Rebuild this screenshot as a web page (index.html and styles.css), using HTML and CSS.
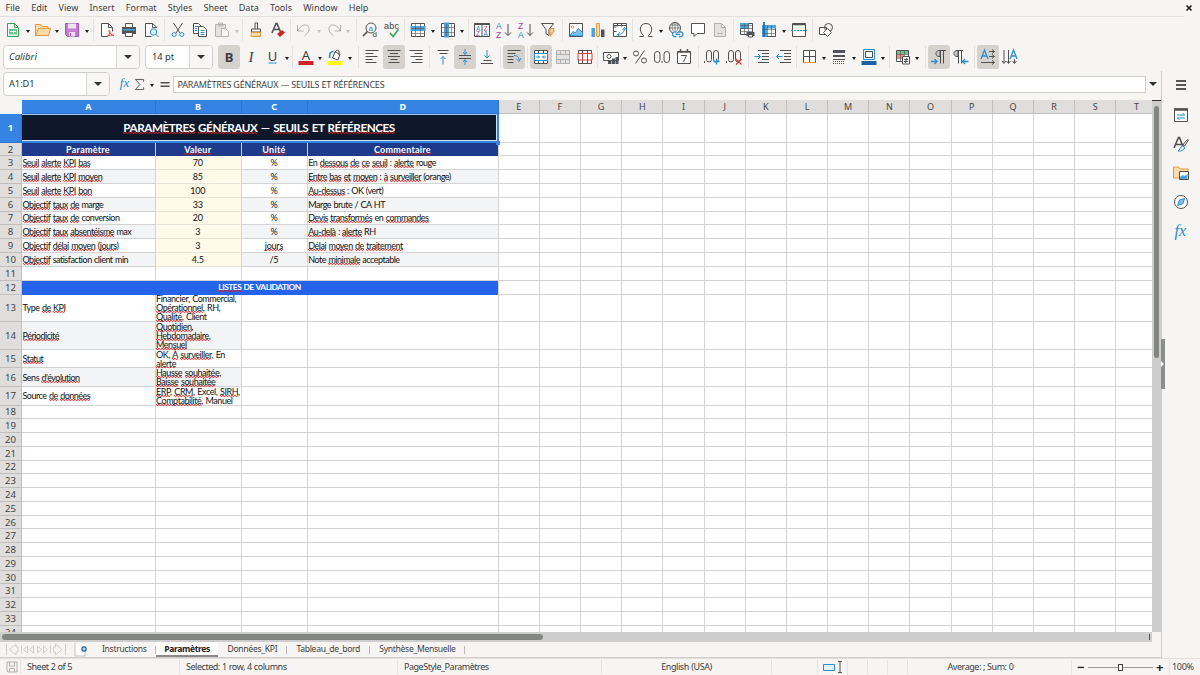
FILE: index.html
```html
<!DOCTYPE html>
<html lang="en">
<head>
  <meta charset="UTF-8">
  <meta name="viewport" content="width=device-width, initial-scale=1.0">
  <title>Spreadsheet</title>
  <link rel="stylesheet" href="styles.css">
</head>
<body>
  <div class="window">
    <div class="menubar">
      <span>File</span><span>Edit</span><span>View</span><span>Insert</span><span>Format</span><span>Styles</span><span>Sheet</span><span>Data</span><span>Tools</span><span>Window</span><span>Help</span>
      <svg class="close" viewBox="0 0 8 8"><path d="M1.5 1.5l5 5M6.5 1.5l-5 5"/></svg>
    </div>

    <!-- standard toolbar -->
    <div class="toolbar standard">
      <div class="group">
        <button><svg viewBox="0 0 16 16"><path class="green paper" d="M2.5 1.5h7l4 4v9h-11z"/><path class="green" d="M9.5 1.5v4h4"/><path class="fgreen" d="M4 7h8v5.500h-8z"/><path class="white" d="M5 9.500h6M8.500 8v3.500"/></svg></button><i class="arrow"></i>
        <button><svg viewBox="0 0 16 16"><path class="orange forange" d="M.5 13.500v-11h5l1.500 2h6v2"/><path class="orange forange" d="M.5 13.500l3-7h12l-2 7z"/></svg></button><i class="arrow"></i>
        <button><svg viewBox="0 0 16 16"><path class="purple fpurple" d="M1.500 1.500h13v13h-11l-2-2z"/><path class="fpaper" d="M4 1.500h8v5h-8zM5 10h6v4.500h-6z"/><path class="purple" d="M6.500 11v3"/></svg></button><i class="arrow"></i>
      </div>
      <div class="group">
        <button><svg viewBox="0 0 16 16"><path class="paper" d="M8 14.500h-5.500v-13h7l4 4v4"/><path d="M9.500 1.500v4h4"/><path class="red" d="M8 14.500c3-2 3.500-5 2.500-6s-1 3 4.500 5c-2-1-5 0-7 1z"/></svg></button>
        <button><svg viewBox="0 0 16 16"><path class="paper" d="M4.500 5v-3.500h7v3.500"/><path class="fdark" d="M1 5h14v7h-14z"/><path class="fblue" d="M2 7h12v1.500h-12z"/><path class="paper" d="M4.500 10.500h7v4h-7z"/></svg></button>
        <button><svg viewBox="0 0 16 16"><path class="paper" d="M13.500 6v-1l-4-3.500h-7v13h6"/><path d="M9.500 1.500v4h4"/><circle class="blue flight" cx="10.500" cy="10" r="3.200"/><path class="blue" d="M13 12.500l2.500 2.500"/></svg></button>
      </div>
      <div class="group">
        <button><svg viewBox="0 0 16 16"><path d="M3.500 1l6.500 10M12.500 1l-6.500 10"/><circle class="blue" cx="4.200" cy="12.500" r="2"/><circle class="blue" cx="11.800" cy="12.500" r="2"/></svg></button>
        <button><svg viewBox="0 0 16 16"><path class="paper" d="M1.500 1.500h5l3 3v7h-8z"/><path class="paper" d="M6.500 4.500h5l3 3v7h-8z"/><path class="blue" d="M3 4.500h3M3 6.500h2M3 8.500h2M8.500 8.500h4M8.500 10.500h4M8.500 12.500h4"/></svg></button>
        <button><svg class="off" viewBox="0 0 16 16"><path class="fgray" d="M1.500 2.500h10v12h-10z"/><path d="M4.500 1h4v3h-4z"/><path class="paper" d="M7.500 6.500h4l3 3v5h-7z"/></svg></button><i class="arrow dim"></i>
      </div>
      <div class="group">
        <button><svg viewBox="0 0 16 16"><path d="M7 7v-6h2.500v6M3.500 7h9v3h-9z"/><path class="orange forange" d="M3.500 10.500h9v4h-9.500z"/></svg></button>
        <button><svg viewBox="0 0 16 16"><path class="thick" d="M2 11l4-9.500h1l3.500 8.500M3.500 7.500h5.500"/><path class="red fred" d="M7 12l5-4 3 2.500-5 4.500z"/></svg></button>
      </div>
      <div class="group">
        <button><svg class="off" viewBox="0 0 16 16"><path d="M1.500 3v6h6M1.500 9c3-6 9-8 11-4s-2 7-4 9"/></svg></button><i class="arrow dim"></i>
        <button><svg class="off" viewBox="0 0 16 16"><path d="M14.500 3v6h-6M14.500 9c-3-6-9-8-11-4s2 7 4 9"/></svg></button><i class="arrow dim"></i>
      </div>
      <div class="group">
        <button><svg viewBox="0 0 16 16"><circle cx="9" cy="6" r="5"/><path class="thick" d="M5.500 9.500l-4.500 4.500"/><text class="tblue" x="6.500" y="8.500" font-size="8">a</text><text x="10.500" y="15" font-size="8">d</text></svg></button>
        <button><svg viewBox="0 0 16 16"><text x="0" y="7" font-size="9" textLength="15">abc</text><path class="green thick" d="M6 11l3 3.500 5.500-7"/></svg></button>
      </div>
      <div class="group">
        <button><svg viewBox="0 0 16 16"><path class="paper" d="M1.500 1.500h13v13h-13z"/><path class="fblue" d="M.5 4h15v5h-15z"/><path class="fine" d="M1.500 11.500h13M1.500 6.500h13M5.500 1.500v13M10.500 1.500v13"/></svg></button><i class="arrow"></i>
        <button><svg viewBox="0 0 16 16"><path class="paper" d="M1.500 1.500h13v13h-13z"/><path class="fblue" d="M4 .5h5v15h-5z"/><path class="fine" d="M1.500 5.500h13M1.500 10.500h13M11.500 1.500v13M6.500 1.500v13"/></svg></button><i class="arrow"></i>
      </div>
      <div class="group">
        <button><svg viewBox="0 0 16 16"><path class="paper" d="M.5 1.500h15v13h-15zM8 3v11.500"/><path class="thick" d="M.5 2.200h15"/><g font-size="6.500"><text class="tblue" x="2" y="8.800">A</text><text class="tpurple" x="2" y="14">Z</text><text class="tpurple" x="9.500" y="8.800">Z</text><text class="tblue" x="9.500" y="14">A</text></g></svg></button>
        <button><svg viewBox="0 0 16 16"><g font-size="8.500"><text class="tblue" x="0" y="7">A</text><text class="tpurple" x="0" y="15.500">Z</text></g><path d="M12 2v11.500M9 10.500l3 3 3-3"/></svg></button>
        <button><svg viewBox="0 0 16 16"><g font-size="8.500"><text class="tpurple" x="0" y="7">Z</text><text class="tblue" x="0" y="15.500">A</text></g><path d="M12 2v11.500M9 10.500l3 3 3-3"/></svg></button>
        <button><svg viewBox="0 0 16 16"><path d="M1.500 1.500h12l-4.500 6v6l-3-2v-4z"/><path class="orange forange" d="M11 6.500h3l-1 2.500h1.500l-4.500 5.500 1-4h-1.500z"/></svg></button>
      </div>
      <div class="group">
        <button><svg viewBox="0 0 16 16"><path class="paper" d="M1.500 1.500h13v13h-13z"/><circle class="orange" cx="4.500" cy="5" r="1.200"/><path class="blue fsky" d="M2 13.500l3-4 2 1.500 3.500-4.500 4 4v3.500z"/></svg></button>
        <button><svg viewBox="0 0 16 16"><path class="fblue" d="M1.500 6h3.500v9h-3.500z"/><path class="orange forange" d="M6.500 1.500h3v13h-3z"/><path class="fdark" d="M11 7.500h3.500v7.500h-3.500z"/></svg></button>
        <button><svg viewBox="0 0 16 16"><path class="paper" d="M1.500 1.500h13v13h-13zM5.500 1.500v3M1.500 5h3M9.500 1.500v3M1.500 9.500h3M1.500 3.500h13"/><path class="blue" d="M6 12.500c4 0 6-2 6.500-6M10.500 8l2-2.500 2 2.500M8 10.500l-2.500 2 2.500 2"/></svg></button>
      </div>
      <div class="group">
        <button><svg viewBox="0 0 16 16"><path d="M1.500 14.500h4v-1c-5-4-4-12 2.500-12s7.500 8 2.500 12v1h4"/></svg></button><i class="arrow"></i>
        <button><svg viewBox="0 0 16 16"><circle cx="7" cy="6" r="5.500"/><path class="fine" d="M1.500 6h11M7 .5v9M2.500 3h9M5 1q-2 5 0 8M9 1q2 5 0 8"/><path class="paper blue wide" d="M8.500 10h-2.500q-3 2 0 4.500h2.500M11 10h2.500q3 2 0 4.500h-2.500M7.500 12.300h4.500"/></svg></button>
        <button><svg viewBox="0 0 16 16"><path class="paper" d="M1.500 1.500h13v10h-7.500l-3 3v-3h-2.500z"/></svg></button>
        <button><svg class="off" viewBox="0 0 16 16"><path class="fgray" d="M2.500 1.500h7l4 4v9h-11zM9.500 1.500v4h4M5 11.500h6"/></svg></button>
      </div>
      <div class="group">
        <button><svg viewBox="0 0 16 16"><path class="paper" d="M1.500 1.500h12v11h-12z"/><path class="fblue" d="M1 1h9v6h-9z"/><path class="fine" d="M1.500 3.500h12M1.500 6.500h12M1.500 9.500h12M5.500 1.500v11M9.500 1.500v11"/><path class="fdark" d="M7.500 10h8v4h-8z"/><path class="paper" d="M9.500 12.500h4v2.500h-4z"/></svg></button>
        <button><svg viewBox="0 0 16 16"><path class="paper" d="M1.500 3.500h13v11h-13z"/><path class="fblue" d="M1 3h14v3.500h-9v8.500h-5z"/><path class="fine" d="M1.500 7.500h13M1.500 11.500h13M6.500 3.500v11M10.500 3.500v11"/><path class="navy thick" d="M3 0v15"/></svg></button><i class="arrow"></i>
        <button><svg viewBox="0 0 16 16"><path class="paper" d="M1.500 1.500h13v13h-13z"/><path class="thick" d="M1.500 2.500h13"/><path class="blue" stroke-dasharray="2 1" d="M0 8.500h16"/></svg></button>
      </div>
      <div class="group">
        <button><svg viewBox="0 0 16 16"><path class="paper" d="M1.500 5.500h7v7h-7z"/><circle cx="10.500" cy="5.500" r="4"/><path class="paper" d="M9.500 6.500l4 4-4 4-4-4z"/></svg></button>
      </div>
    </div>

    <!-- formatting toolbar -->
    <div class="toolbar formatting">
      <div class="combo font-name"><span>Calibri</span><b></b></div>
      <div class="combo font-size"><span>14 pt</span><b></b></div>
      <div class="group">
        <button class="on"><svg viewBox="0 0 16 16"><text class="glyph bold" x="8" y="13">B</text></svg></button>
        <button><svg viewBox="0 0 16 16"><text class="glyph italic" x="8" y="13">I</text></svg></button>
        <button><svg viewBox="0 0 16 16"><text class="glyph" x="7.500" y="11.500">U</text><path class="blue" d="M3.500 14h8"/></svg></button><i class="arrow"></i>
      </div>
      <div class="group">
        <button><svg viewBox="0 0 16 16"><text class="glyph" x="8" y="10.500">A</text><path class="fred" d="M.5 12h15v4h-15z"/></svg></button><i class="arrow"></i>
        <button><svg viewBox="0 0 16 16"><path class="paper" d="M8 3l5 2-2 6-5.500-2zM8 3l2-2 2 1v4"/><path class="blue thick" d="M6.500 2.500c-3 0-4 1-4 6.500"/><path class="fyellow" d="M.5 12h15v4h-15z"/></svg></button><i class="arrow"></i>
      </div>
      <div class="group">
        <button><svg viewBox="0 0 16 16"><path d="M1.500 1.500h13M1.500 4.500h8M1.500 7.500h12M1.500 10.500h7M1.500 13.500h11"/></svg></button>
        <button class="on"><svg viewBox="0 0 16 16"><path d="M1.500 1.500h13M4 4.500h8M2 7.500h12M4.500 10.500h7M2.500 13.500h11"/></svg></button>
        <button><svg viewBox="0 0 16 16"><path d="M1.500 1.500h13M6.500 4.500h8M2.500 7.500h12M7.500 10.500h7M3.500 13.500h11"/></svg></button>
      </div>
      <div class="group">
        <button><svg viewBox="0 0 16 16"><path d="M2.500 1.500h11M4.500 4.500h8"/><path class="blue" d="M8 15.500v-8M5.500 10l2.500-2.500 2.500 2.500"/></svg></button>
        <button class="on"><svg viewBox="0 0 16 16"><path d="M2 6.500h12M2 9.500h12"/><path class="blue" d="M8 0v5M6 3l2 2.500 2-2.500M8 16v-5M6 13l2-2.500 2 2.500"/></svg></button>
        <button><svg viewBox="0 0 16 16"><path d="M4.500 11.500h8M2 14.500h12"/><path class="blue" d="M8 1v8M5.500 6.500l2.500 2.500 2.500-2.500"/></svg></button>
      </div>
      <div class="group">
        <button class="on"><svg viewBox="0 0 16 16"><path d="M1.500 1.500h13M1.500 4.500h8M1.500 7.500h6M1.500 10.500h6M1.500 13.500h6"/><path class="blue" d="M8 6.500c4 0 5 2 5 5M10.500 10l2.500 2.500 2-3.500"/></svg></button>
      </div>
      <div class="group">
        <button class="on"><svg viewBox="0 0 16 16"><path class="paper" d="M1.500 1.500h13v13h-13zM5.500 1.500v4M10.500 1.500v4M5.500 11.500v3M10.500 11.500v3"/><path class="blue paper" d="M1.500 4.500h13v7h-13z"/><path class="blue" d="M3 8h3.500M13 8h-3.500M5 6.500l1.500 1.500-1.500 1.500M11 6.500l-1.500 1.500 1.500 1.500"/></svg></button>
        <button><svg class="off" viewBox="0 0 16 16"><path class="fgray" d="M1.500 1.500h13v13h-13zM1.500 5.500h13M1.500 10.500h13M5.500 1.500v4M10.500 1.500v4M5.500 10.500v4M10.500 10.500v4"/></svg></button>
        <button><svg viewBox="0 0 16 16"><path class="paper" d="M1.500 1.500h13v13h-13zM5.500 1.500v13M10.500 1.500v13"/><path class="red paper" d="M1 4.500h14v6.500h-14zM5.500 4.500v6.500M10.500 4.500v6.500"/></svg></button>
      </div>
      <div class="group">
        <button><svg viewBox="0 0 16 16"><path class="paper" d="M.5 3.500h15v8h-15z"/><circle cx="6" cy="7.500" r="2"/><path class="fdark" d="M5 11.500h3.500v3.500h-3.500zM9 9.500h3v5.500h-3zM12.500 8h3v7h-3z"/></svg></button><i class="arrow"></i>
        <button><svg viewBox="0 0 16 16"><circle cx="4" cy="4.500" r="2.500"/><circle cx="12" cy="11.500" r="2.500"/><path d="M12.500 1.500l-9 13"/></svg></button>
        <button><svg viewBox="0 0 16 16"><rect x=".5" y="2.500" width="5.500" height="11" rx="2.700"/><rect x="10" y="2.500" width="5.500" height="11" rx="2.700"/><path d="M8 12v2"/></svg></button>
        <button><svg viewBox="0 0 16 16"><path class="paper" d="M1.500 2.500h13v12h-13z"/><path class="thick" d="M1.500 3h13M4.500 0v3M11.500 0v3"/><path d="M5 6.500h5.500l-3 6.500"/></svg></button>
      </div>
      <div class="group">
        <button><svg viewBox="0 0 16 16"><path d="M.5 12v2"/><rect x="2.500" y="1.500" width="5" height="11.500" rx="2.500"/><rect x="9.500" y="1.500" width="5" height="11.500" rx="2.500"/><path class="blue wide" d="M9.500 12.500h6M12.500 9.500v6"/></svg></button>
        <button><svg viewBox="0 0 16 16"><path d="M.5 12v2"/><rect x="2.500" y="1.500" width="5" height="11.500" rx="2.500"/><rect x="9.500" y="1.500" width="5" height="11.500" rx="2.500"/><path class="red wide" d="M10 10l5.500 5.500M15.500 10l-5.500 5.500"/></svg></button>
      </div>
      <div class="group">
        <button><svg viewBox="0 0 16 16"><path d="M4 1.500h11M8 4.500h7M8 7.500h7M8 10.500h7M4 13.500h11"/><path class="blue" d="M.5 7.500h6M4 5l2.500 2.500-2.500 2.500"/></svg></button>
        <button><svg viewBox="0 0 16 16"><path d="M4 1.500h11M8 4.500h7M8 7.500h7M8 10.500h7M4 13.500h11"/><path class="blue" d="M.5 7.500h6M3 5l-2.500 2.500 2.500 2.500"/></svg></button>
      </div>
      <div class="group">
        <button><svg viewBox="0 0 16 16"><path class="paper" d="M1.500 1.500h12v12h-12zM7.500 1.500v12M1.500 7.500h12"/><path class="orange" d="M1.500 13.500h12"/></svg></button><i class="arrow"></i>
        <button><svg viewBox="0 0 16 16"><path class="fdark" d="M2 1h12v3h-12zM2 6h12v2h-12z"/><path d="M2 10.500h12"/><path stroke-dasharray="1 1" d="M2 12.500h12M2 14.500h12"/></svg></button><i class="arrow"></i>
        <button><svg viewBox="0 0 16 16"><path class="blue flight" d="M2.500 .5h11v10h-11z"/><path class="paper" d="M4.500 2.500h7v6h-7z"/><path class="fnavy" d="M.5 12h15v4h-15z"/></svg></button><i class="arrow"></i>
      </div>
      <div class="group">
        <button><svg viewBox="0 0 16 16"><path class="paper" d="M1.500 1.500h12v11h-12z"/><path class="fgreen" d="M2 2h11v3h-11z"/><path class="fsalmon" d="M2 5h7v4h-7z"/><path class="fine" d="M1.500 5.500h12M1.500 9.500h12M5.500 1.500v11M9.500 1.500v11"/><path class="paper" d="M7.500 7.500h7v7.500h-7z"/><path d="M9 10.500h4M9 12.500h4M12 9l-2 5"/></svg></button><i class="arrow"></i>
      </div>
      <div class="group">
        <button class="on"><svg viewBox="0 0 16 16"><path class="fgray" d="M9 1.500h-1c-4 0-4 6 0 6h1z"/><path d="M15 1.500h-7M9.500 1.500v13M12.500 1.500v13"/><path class="blue wide" d="M0 12.500h6M3.500 10l2.500 2.500-2.500 2.500"/></svg></button>
        <button><svg viewBox="0 0 16 16"><path class="fgray" d="M5 1.500h-1c-4 0-4 6 0 6h1z"/><path d="M10 1.500h-6M5.500 1.500v13M8.500 1.500v13"/><path class="blue wide" d="M9.500 12.500h6M12 10l-2.500 2.500 2.500 2.500"/></svg></button>
      </div>
      <div class="group">
        <button class="on"><svg viewBox="0 0 16 16"><path class="blue wide" d="M1 10l3.500-9 3.500 9M2.500 7h4.500"/><path d="M9 2.500h5M9 7.500h5M1 13.500h13M12 .5l2.500 2-2.500 2M12 5.500l2.500 2-2.500 2M12 11.500l2.500 2-2.500 2"/></svg></button>
        <button><svg viewBox="0 0 16 16"><path class="blue wide" d="M8 10l3.500-9 3.500 9M9.500 7h4.500"/><path d="M2 1v13M6.500 1v13M12.500 10v4M0 12l2 2.500 2-2.500M4.500 12l2 2.500 2-2.500M10.500 12l2 2.500 2-2.500"/></svg></button>
      </div>
    </div>

    <div class="main">
      <div class="document">
        <div class="formulabar">
          <div class="combo name-box"><span>A1:D1</span><b></b></div>
          <svg class="fx" viewBox="0 0 16 16"><text x="1" y="12">fx</text></svg>
          <svg class="sigma" viewBox="0 0 12 14"><path d="M10.500 4v-2.500h-9l5 5.500-5 5.500h9v-2.500"/></svg>
          <i class="arrow"></i>
          <svg class="equals" viewBox="0 0 10 8"><path d="M1 2.500h8M1 5.500h8"/></svg>
          <div class="formula">PARAMÈTRES GÉNÉRAUX — SEUILS ET RÉFÉRENCES</div>
          <b class="expand"></b>
        </div>

        <div class="sheet-area">
          <div class="sheet" id="sheet"></div>
          <div class="vscroll"><div class="thumb"></div></div>
        </div>
        <div class="hscroll"><div class="thumb"></div></div>

        <div class="tabbar">
          <svg class="nav" viewBox="0 0 62 12"><path d="M1.500 .5v11M11 .5l-6.500 5.500 6.500 5.500v-3h2v-5h-2zM16.500 2v8M22.500 2.500l-4 3.500 4 3.500zM28.500 2.500l-4 3.500 4 3.500zM32.500 2.500l4 3.500-4 3.500zM38.500 2.500l4 3.500-4 3.500zM45.500 2v8M50.500 .5l6.500 5.500-6.500 5.500v-3h-2v-5h2zM60.500 .5v11"/></svg>
          <svg class="add" viewBox="0 0 14 14"><path d="M1 0v13.500h10v-5"/><circle cx="10" cy="6.500" r="2.700"/><path class="plus" d="M10 5v3M8.500 6.500h3"/></svg>
          <span class="tab">Instructions</span><span class="tab active">Paramètres</span><span class="tab">Données_KPI</span><span class="tab">Tableau_de_bord</span><span class="tab">Synthèse_Mensuelle</span>
        </div>
      </div>

      <div class="sidebar">
        <svg class="burger" viewBox="0 0 16 16"><path d="M3 4h10M3 8h10M3 12h10"/></svg>
        <svg viewBox="0 0 16 16"><path class="paper" d="M1.500 2h13v12.500h-13z"/><path class="heavy" d="M1 2.500h14"/><path class="blue" d="M4 8h8M9.500 6l2 2M12 11h-8M6.500 13l-2-2"/></svg>
        <svg viewBox="0 0 16 16"><path class="thick" d="M1 12l4.500-10.500h1l3.500 9M3 8.500h6"/><path d="M15.500 4l-4 6-2 1 1-3 4-4.500z"/><path class="blue flight" d="M9.500 10l2 1c0 3-3 4.500-6.500 4 2-1 2-4 4.500-5z"/></svg>
        <svg viewBox="0 0 16 16"><path class="orange forange" d="M.5 13v-11h5l1.500 2h8v9z"/><path class="paper" d="M6.500 6.500h9v8h-9z"/><path class="fblue" d="M7 14v-2l2.500-2 2 1 3-2v5z"/></svg>
        <svg viewBox="0 0 16 16"><circle class="paper" cx="8" cy="8" r="6.500"/><path class="blue fsky" d="M11.500 4.500l-1.500 5-5.500 2 2-5.500z"/></svg>
        <svg class="fx" viewBox="0 0 16 16"><text x="1.500" y="13">fx</text></svg>
        <div class="handle"></div>
      </div>
    </div>

    <div class="statusbar">
      <svg class="saved" viewBox="0 0 12 12"><path d="M1 1h10v10h-9l-1-1zM3.500 1v4h5v-4M3.500 11v-3.500h5v3.500"/></svg>
      <span class="pages">Sheet 2 of 5</span>
      <span class="selected">Selected: 1 row, 4 columns</span>
      <span class="pagestyle">PageStyle_Paramètres</span>
      <span class="lang">English (USA)</span>
      <span class="insmode"></span>
      <span class="selmode"><svg viewBox="0 0 20 12"><path class="blue flight" d="M.5 3.500h11v6h-11z"/><path d="M15 .5h4M15 11.500h4M17 .5v11"/></svg></span>
      <span class="cell-gap"></span><span class="cell-gap"></span><span class="cell-gap"></span>
      <span class="sum">Average: ; Sum: 0</span>
      <span class="zoom"><b>−</b><i class="slider"></i><b>+</b></span>
      <span class="percent">100%</span>
    </div>
  </div>
  <script src="script.js"></script>
</body>
</html>
```
FILE: styles.css
```css
* {
  box-sizing: border-box;
}

body {
  margin: 0;
  background: #f6f5f4;
  color: #3d3d3d;
  font-family: "Noto Sans", sans-serif;
  font-size: 9px;
}

.window {
  width: 1200px;
  height: 675px;
  display: flex;
  flex-direction: column;
  overflow: hidden;
}

svg {
  display: block;
  overflow: visible;
  fill: none;
  stroke: #505050;
  stroke-width: 1;
}

svg text {
  fill: #3d3d3d;
  stroke: none;
}

/* menu */
.menubar {
  height: 17px;
  margin-right: 16px;
  padding-left: 5.5px;
  border-bottom: 1px solid #e2e0de;
  display: flex;
  gap: 11.2px;
  align-items: center;
  font-size: 9.05px;
  line-height: 16px;
}

.close {
  width: 8px;
  height: 8px;
  margin-left: auto;
  margin-right: -9px;
  stroke: #222;
  stroke-width: 1.7;
}

/* toolbars */
.toolbar {
  height: 27px;
  padding-bottom: 1px;
  display: grid;
  align-items: center;
}

.standard {
  grid-template-columns: 93px 71px 78px 48px 66px 48px 64px 94px 70px 101px 79px 40px;
}

.formatting {
  grid-template-columns: 142px 73px 77px 66px 71px 71px 27px 70px 101px 50px 48px 93px 36px 49px 60px;
}

.group {
  height: 22px;
  padding-left: 2px;
  border-left: 1px solid #e4e2e0;
  display: flex;
  align-items: center;
}

.formatting .group {
  padding-left: 1.6px;
}

.standard .group:first-child,
.combo + .group {
  border-left: 0;
}

.formatting .combo + .group {
  padding-left: 2.6px;
}

button {
  width: 22px;
  height: 24px;
  flex: none;
  padding: 0;
  border: 0;
  border-radius: 3px;
  background: none;
  display: flex;
  align-items: center;
  justify-content: center;
}

button.on {
  background: #d5d1cd;
}

button svg {
  width: 16px;
  height: 16px;
}

.arrow {
  width: 7.5px;
  flex: none;
}

.arrow::before {
  content: "";
  display: block;
  width: 0;
  margin: 2px auto 0;
  border: 2.5px solid transparent;
  border-top: 3px solid #1c1c1c;
  border-bottom: 0;
}

.arrow.dim::before {
  border-top-color: #c4c2c0;
}

.combo {
  height: 24px;
  margin-left: 3px;
  border: 1px solid #d2cecb;
  border-radius: 4px;
  background: #fff;
  display: flex;
  font-size: 9.3px;
  line-height: 21px;
  color: #2e3436;
}

.combo span {
  flex: 1;
  padding-left: 5px;
}

.combo b {
  width: 23px;
  border-left: 1px solid #d9d6d3;
  border-radius: 0 3px 3px 0;
  background: #f8f7f6;
  display: flex;
  align-items: center;
  justify-content: center;
}

.combo b::before,
.expand::before {
  content: "";
  border: 4px solid transparent;
  border-top: 4px solid #2e3436;
  border-bottom: 0;
}

.font-name {
  width: 137px;
  font-style: italic;
  font-size: 9.6px;
}

.font-size {
  width: 68px;
}

.font-size span {
  padding-left: 6px;
}

/* icon colours */
.off { opacity: .4; }
.fine { stroke-width: .6; }
.thick { stroke-width: 1.6; }
.wide { stroke-width: 1.3; }
.heavy { stroke-width: 2.5; }
.paper { fill: #fff; }
.white { stroke: #fff; }
.blue { stroke: #2a8fd0; }
.navy { stroke: #1565a5; }
.green { stroke: #35a257; }
.orange { stroke: #e8973c; }
.purple { stroke: #9b4fb0; }
.red { stroke: #dc3b3b; }
.flight { fill: #e3f2fc; }
.fsky { fill: #83c0ec; }
.forange { fill: #fbdba8; }
.fpurple { fill: #c47fd4; }
.fblue { fill: #4da3dc; stroke: none; }
.fnavy { fill: #1f5fa8; stroke: none; }
.fgreen { fill: #6cc287; stroke: none; }
.fred { fill: #cf2424; stroke: none; }
.fsalmon { fill: #f3937f; stroke: none; }
.fyellow { fill: #ffff00; stroke: none; }
.fgray { fill: #c8c8c8; }
.fdark { fill: #505458; stroke: none; }
.fpaper { fill: #f3e3f7; stroke: none; }
svg .tblue { fill: #1e8bcd; }
svg .tpurple { fill: #a13fb5; }

.glyph {
  font-family: "Noto Sans", sans-serif;
  font-size: 13px;
  text-anchor: middle;
}

.glyph.bold {
  font-weight: bold;
}

.glyph.italic {
  font-family: "Liberation Serif", serif;
  font-style: italic;
  font-size: 15px;
}

.fx text {
  font-family: "Liberation Serif", serif;
  font-style: italic;
  font-size: 16px;
  fill: #1e8bcd;
}

/* main */
.main {
  height: 587px;
  display: flex;
}

.document {
  width: 1162px;
  border-right: 1px solid #cfcdcb;
}

.formulabar {
  height: 29px;
  display: flex;
  align-items: center;
  padding-bottom: 3px;
}

.name-box {
  width: 107px;
  font-size: 9.2px;
}

.formulabar .fx {
  width: 13px;
  height: 14px;
  margin-left: 9px;
}

.sigma {
  width: 11px;
  height: 13px;
  margin: 0 3px 0 2px;
}

.equals {
  width: 12px;
  height: 9px;
  margin: 0 2px 0 3px;
  stroke-width: 1.4;
}

.formula {
  flex: 1;
  height: 17px;
  padding-left: 4px;
  border: 1px solid #d2cecb;
  background: #fff;
  line-height: 15px;
  letter-spacing: -0.21px;
}

.expand {
  width: 13px;
  margin-right: 2px;
  display: flex;
  justify-content: center;
}

.sheet-area {
  height: 532px;
  display: flex;
}

.sheet {
  width: 1152px;
  height: 532px;
  overflow: hidden;
  display: grid;
  align-content: start;
  grid-template-columns: 22px 133.5px 86px 66.3px 190.8px repeat(16, 41.2px);
  background: #fff;
}

.colhead,
.rowhead {
  background: #dfdedd;
  border-right: 1px solid #c0bfbe;
  border-bottom: 1px solid #c0bfbe;
  display: flex;
  align-items: center;
  justify-content: center;
  font-size: 9px;
  line-height: 12px;
  color: #444;
}

.rowhead {
  padding-top: 1px;
  font-size: 9.6px;
}

.colhead.sel,
.rowhead.sel {
  background: #3584e4;
  border-color: #2f74c8;
  color: #fff;
  font-weight: bold;
}

.corner {
  background: #f6f5f4;
}

.cell {
  min-width: 0;
  padding: 0 1px 0 0.5px;
  border-right: 1px solid #d3d3d3;
  border-bottom: 1px solid #d3d3d3;
  display: flex;
  align-items: center;
  font-family: Lato, sans-serif;
  font-size: 9px;
  line-height: 9.1px;
  letter-spacing: -0.5px;
  word-spacing: 0.6px;
  color: #111;
  white-space: nowrap;
}

.cell.wrap {
  white-space: pre;
  letter-spacing: -0.44px;
  word-spacing: 0.8px;
}

.cell.center {
  justify-content: center;
  letter-spacing: -0.2px;
}

.cell.band {
  background: #f3f4f6;
}

.cell.input {
  background: #fffbe8;
  border-bottom-color: #e8e5d8;
}

.cell.head {
  background: #1e3a8a;
  border-bottom: 0;
  color: #fff;
  font-weight: bold;
  letter-spacing: 0.25px;
}

.cell.section {
  grid-column: span 4;
  background: #2563eb;
  border-bottom: 0;
  color: #fff;
  font-weight: bold;
  font-size: 8.4px;
  letter-spacing: -0.48px;
}

.cell.title {
  grid-column: span 4;
  position: relative;
  background: #0f172a;
  border: 0;
  border-right: 2px solid #3584e4;
  border-bottom: 2px solid #3584e4;
  box-shadow: inset 0 1px #9cc3f2, inset -1px -1px #cfe2f8;
  color: #fff;
  font-weight: bold;
  font-size: 11.7px;
  line-height: 14px;
  letter-spacing: -0.44px;
  word-spacing: 1px;
}

.title::after {
  content: "";
  position: absolute;
  right: -3px;
  bottom: -4px;
  width: 4px;
  height: 4px;
  background: #3584e4;
}

.misspelt {
  background: url("data:image/svg+xml,%3Csvg xmlns='http://www.w3.org/2000/svg' width='3' height='2'%3E%3Cpath d='M0 .4L1.500 1.500L3 .4' fill='none' stroke='%23e01818' stroke-width='1'/%3E%3C/svg%3E") left bottom / 3px 2px repeat-x;
}

.vscroll {
  width: 9px;
  padding: 5px 2px 0;
  border-top: 1px solid #333;
  background: #cdcdcd;
}

.vscroll .thumb {
  height: 252px;
  border-radius: 3px;
  background: #848684;
}

.hscroll {
  width: 1152px;
  height: 10px;
  padding: 2px 0 0 2px;
  background: linear-gradient(#555, #555) right 2px top 2px / 1px 6px no-repeat #cdcdcd;
}

.hscroll .thumb {
  width: 541px;
  height: 6px;
  border-radius: 3px;
  background: #848684;
}

/* sheet tabs */
.tabbar {
  height: 16px;
  border-bottom: 1px solid #cfcdcb;
  display: flex;
  align-items: center;
}

.nav {
  width: 62px;
  height: 13px;
  margin-left: 5px;
  stroke: #cfcdcb;
}

.add {
  width: 14px;
  height: 15px;
  margin: 0 6px 0 7px;
  stroke: #c0c0c0;
  fill: #fff;
}

.add circle {
  fill: #1c5dab;
  stroke: none;
}

.add .plus {
  stroke: #fff;
}

.tab {
  height: 15px;
  padding: 0 9.6px;
  font-size: 8.6px;
  line-height: 14px;
  letter-spacing: -0.31px;
  background: linear-gradient(#bbb, #bbb) right 4px / 1px 8px no-repeat;
}

.add + .tab {
  padding-left: 8px;
}

.tab.active {
  padding: 0 8px;
  background: #fff;
  border-bottom: 2px solid #8a8a8a;
  font-weight: bold;
  letter-spacing: -0.4px;
  color: #222;
}

/* sidebar */
.sidebar {
  width: 38px;
  padding-top: 6px;
  position: relative;
  display: flex;
  flex-direction: column;
  align-items: center;
}

.sidebar svg {
  width: 16px;
  height: 16px;
  margin-bottom: 13px;
}

.sidebar .burger {
  margin-bottom: 14px;
  stroke: #222;
  stroke-width: 1.4;
}

.handle {
  position: absolute;
  left: -1px;
  top: 268px;
  width: 4px;
  height: 50px;
  background: #8b8e8b;
}

.handle::before {
  content: "";
  display: block;
  margin-top: 22px;
  width: 0;
  border: 3px solid transparent;
  border-left: 3px solid #fff;
  border-right: 0;
}

/* status bar */
.statusbar {
  height: 17px;
  border-top: 1px solid #e2e0de;
  display: grid;
  grid-template-columns: 20px 159px 218px 204px 170px 46px 30px 20px 20px 20px 164px 98px 31px;
  line-height: 16px;
  letter-spacing: -0.47px;
  word-spacing: 0.3px;
}

.statusbar > span {
  border-left: 1px solid #e4e2e0;
  height: 14px;
  margin-top: 1px;
  line-height: 14px;
}

.saved {
  width: 12px;
  height: 12px;
  margin: 2px 0 0 6px;
  stroke: #b0aeac;
}

.pages,
.selected,
.pagestyle {
  padding-left: 6px;
}

.lang,
.sum {
  text-align: center;
}

.statusbar .lang {
  letter-spacing: -0.4px;
}

.sum {
  padding-right: 18px;
}

.selmode svg {
  width: 20px;
  height: 12px;
  margin-top: 1px;
  margin-left: 5px;
}

.zoom {
  display: flex;
  align-items: center;
  justify-content: space-between;
  padding: 0 6px 0 5px;
}

.zoom b {
  font-size: 13px;
  color: #222;
}

.slider {
  width: 65px;
  height: 7px;
  background: linear-gradient(#999, #999) 0 3px / 100% 1px no-repeat;
  display: flex;
  justify-content: center;
}

.slider::before {
  content: "";
  width: 3px;
  border: 1px solid #444;
  background: #fff;
}

.percent {
  padding-left: 2px;
  letter-spacing: -0.3px;
}
```
FILE: script.js
```js
// words in [brackets] get the spell checker underline
const rows = [
  ["[PARAMÈTRES] [GÉNÉRAUX] — [SEUILS] ET [RÉFÉRENCES]"],
  ["[Paramètre]", "[Valeur]", "[Unité]", "[Commentaire]"],
  ["[Seuil] [alerte] [KPI] [bas]", "70", "%", "En [dessous] [de] [ce] [seuil] : [alerte] rouge"],
  ["[Seuil] [alerte] [KPI] [moyen]", "85", "%", "[Entre] [bas] [et] [moyen] : [à] [surveiller] (orange)"],
  ["[Seuil] [alerte] [KPI] [bon]", "100", "%", "[Au-dessus] : OK (vert)"],
  ["[Objectif] [taux] [de] marge", "33", "%", "Marge brute / CA HT"],
  ["[Objectif] [taux] [de] conversion", "20", "%", "[Devis] [transformés] en [commandes]"],
  ["[Objectif] [taux] [absentéisme] max", "3", "%", "[Au-delà] : [alerte] RH"],
  ["[Objectif] [délai] [moyen] ([jours])", "3", "[jours]", "[Délai] [moyen] [de] [traitement]"],
  ["[Objectif] satisfaction client min", "4.5", "/5", "Note [minimale] acceptable"],
  [],
  ["[LISTES] DE VALIDATION"],
  ["Type [de] [KPI]", "Financier, Commercial,\n[Opérationnel], RH,\n[Qualité], Client"],
  ["[Périodicité]", "[Quotidien],\n[Hebdomadaire],\n[Mensuel]"],
  ["[Statut]", "OK, [À] [surveiller], En\n[alerte]"],
  ["Sens [d'évolution]", "[Hausse] [souhaitée],\n[Baisse] [souhaitée]"],
  ["Source [de] [données]", "[ERP], [CRM], Excel, [SIRH],\n[Comptabilité], Manuel"]
];

const columns = "ABCDEFGHIJKLMNOPQRST";
const sheet = document.getElementById("sheet");
const heights = { 1: 28.7, 11: 14.3, 13: 27.6, 14: 27.6, 15: 18.6, 16: 18.4, 17: 18.7 };
const tracks = ["14px"];

function add(className, html) {
  const div = document.createElement("div");
  div.className = className;
  div.innerHTML = html ? "<span>" + html + "</span>" : "";
  sheet.appendChild(div);
}

function cellClass(row, col) {
  if (row === 1) return "cell title center";
  if (row === 12) return "cell section center";
  if (row === 2) return "cell head center";
  let name = "cell";
  if (row >= 3 && row <= 10) {
    if (col === 1) name += " input";
    else if (row % 2 === 0) name += " band";
    if (col === 1 || col === 2) name += " center";
  }
  if (row >= 13 && row <= 17) {
    if (row % 2 === 0 && col < 2) name += " band";
    if (col === 1) name += " wrap";
  }
  return name;
}

add("corner");
for (let c = 0; c < columns.length; c++) {
  add(c < 4 ? "colhead sel" : "colhead", columns[c]);
}

for (let r = 1; r <= 34; r++) {
  tracks.push((heights[r] || 13.77) + "px");
  add(r === 1 ? "rowhead sel" : "rowhead", r);
  const data = rows[r - 1] || [];
  for (let c = 0; c < columns.length; c++) {
    const merged = r === 1 || r === 12;
    if (merged && c > 0 && c < 4) continue;
    const text = (data[c] || "").replace(/\[(.+?)\]/g, '<span class="misspelt">$1</span>');
    add(c < 4 ? cellClass(r, c) : "cell", text);
  }
}

sheet.style.gridTemplateRows = tracks.join(" ");
```
